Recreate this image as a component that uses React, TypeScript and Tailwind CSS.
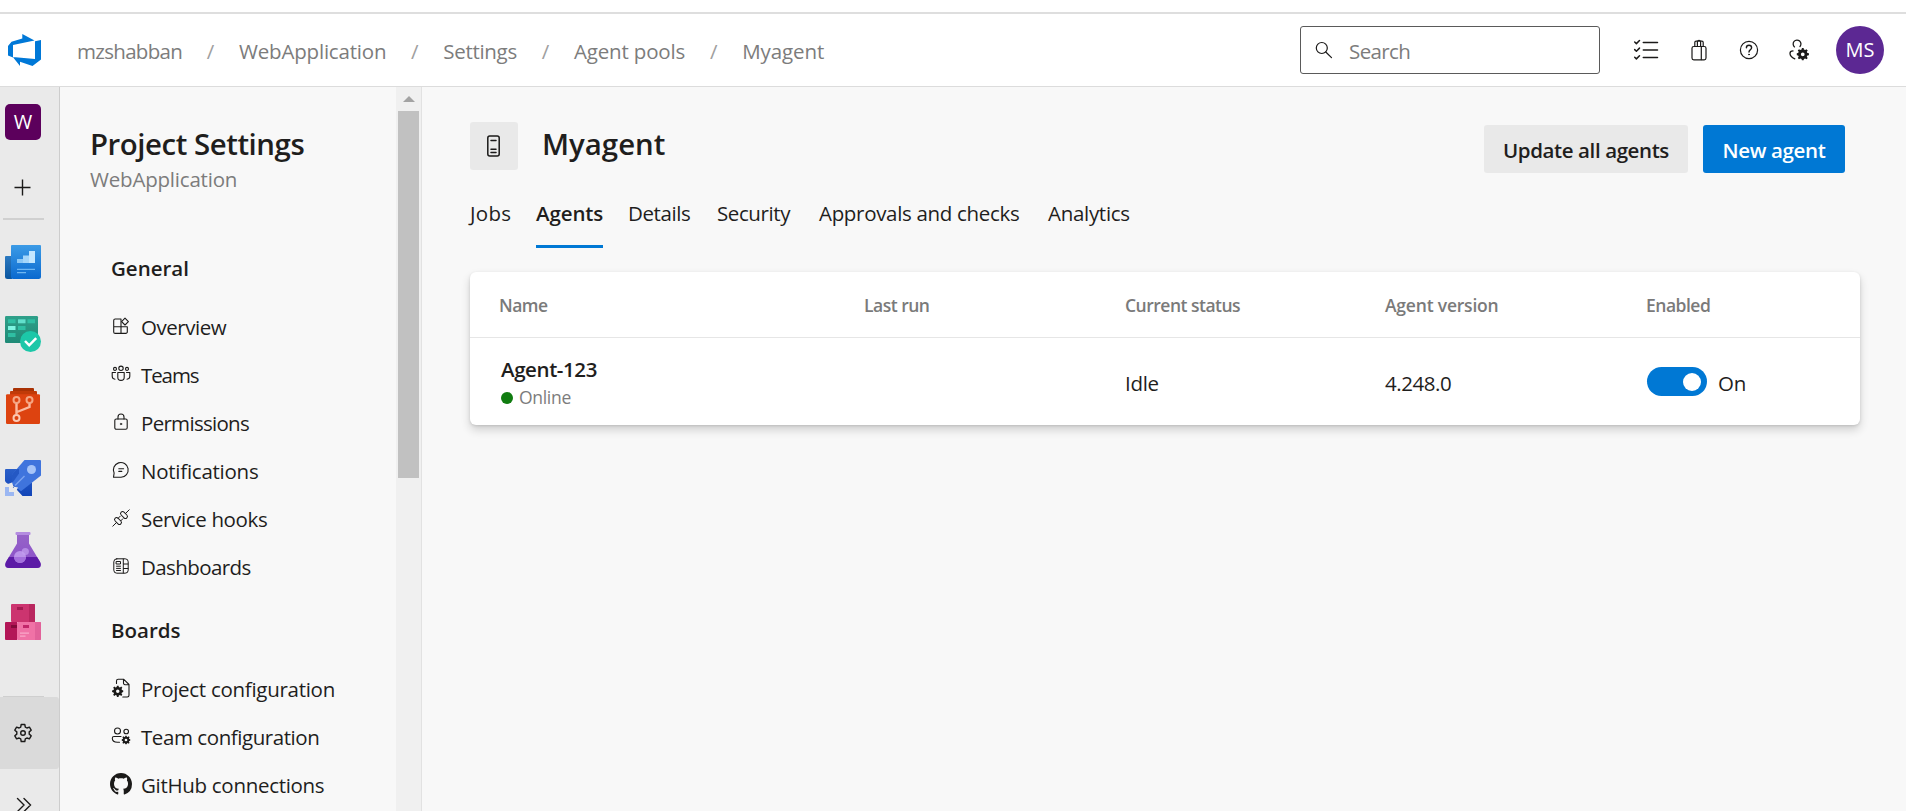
import React from "react";

const gearPath =
  "M6.9 0h2.2l.4 2 1.6.7 1.7-1.2 1.6 1.6-1.2 1.7.7 1.6 2 .4v2.4l-2 .4-.7 1.6 1.2 1.7-1.6 1.6-1.7-1.2-1.6.7-.4 2H6.9l-.4-2-1.6-.7-1.7 1.2-1.6-1.6 1.2-1.7-.7-1.6-2-.4V6.800l2-.4.7-1.6-1.2-1.700 1.600-1.600 1.700 1.200 1.600-.7zM8 5.600a2.400 2.400 0 100 4.800 2.400 2.400 0 000-4.800z";

function SolidGear({ x, y, size }: { x: number; y: number; size: number }) {
  return (
    <svg x={x} y={y} width={size} height={size} viewBox="0 0 16 16">
      <path d={gearPath} fill="#1b1a19" stroke="none" fillRule="evenodd" />
    </svg>
  );
}

function Line({ size, children }: { size: number; children: React.ReactNode }) {
  return (
    <svg
      width={size}
      height={size}
      viewBox={`0 0 ${size} ${size}`}
      fill="none"
      stroke="#1b1a19"
      strokeWidth="1.1"
      strokeLinecap="round"
      strokeLinejoin="round"
      className="shrink-0 overflow-visible"
    >
      {children}
    </svg>
  );
}

/* ---------- header icons ---------- */

function DevOpsLogo() {
  return (
    <svg width="33" height="32" viewBox="0 0 33 32" className="shrink-0">
      <path
        fill="#0078d7"
        d="M33 6v19.500L24.500 32 12 27.800V32L4.800 23l22.200 1.900V7.200zM26.500 6.500 14.300 0v4.500L3.500 7.700 0 12v9.500l5 2V11z"
      />
    </svg>
  );
}

const SearchIcon = () => (
  <Line size={18}>
    <circle cx="6.800" cy="7" r="5.500" strokeWidth="1.2" />
    <path strokeWidth="1.2" d="M10.800 11 16.500 16.700" />
  </Line>
);

const ChecklistIcon = () => (
  <Line size={24}>
    <path strokeWidth="1.500" d="M.7 4l1.700 1.600L5.500 2.500M.7 11.600l1.700 1.600 3.100-3.100M.7 19.300l1.700 1.600 3.100-3.100M9.300 4.500h14.200M9.300 12h14.200M9.300 19.500h14.200" />
  </Line>
);

const BagIcon = () => (
  <Line size={22}>
    <rect x="4" y="7.500" width="14" height="13.300" rx="1.800" strokeWidth="1.200" />
    <path strokeWidth="1.200" d="M6.800 7.500V3.500a1.300 1.300 0 011.300-1.300h5.800a1.300 1.300 0 011.300 1.300v4M9.400 7V3a1.600 1.600 0 013.200 0V7M13.300 7.700v12.900" />
  </Line>
);

const HelpIcon = () => (
  <Line size={20}>
    <circle cx="10" cy="10" r="8.600" strokeWidth="1.200" />
    <path strokeWidth="1.400" d="M7.400 7.800a2.600 2.600 0 115.200 0c0 1.900-2.600 2.200-2.600 4.200" />
    <circle cx="10" cy="14.500" r=".5" fill="#1b1a19" strokeWidth=".8" />
  </Line>
);

const UserGearIcon = () => (
  <Line size={22}>
    <path strokeWidth="1.300" d="M6.500 7.900A3.900 3.900 0 1112 7.500M6.800 19.800C3.800 18.500 2 16.700 2 14.500c0-1.700 1-2.600 3-2.600" />
    <SolidGear x={8.500} y={9} size={12.500} />
  </Line>
);

/* ---------- rail icons ---------- */

const OverviewTile = () => (
  <svg width="36" height="36" viewBox="0 0 36 36">
    <defs>
      <linearGradient id="ovA" x1="0" y1="0" x2="0" y2="1">
        <stop offset="0" stopColor="#3c9be6" />
        <stop offset="1" stopColor="#0a69cf" />
      </linearGradient>
      <linearGradient id="ovB" x1="0" y1="0" x2="0" y2="1">
        <stop offset="0" stopColor="#2c79c0" />
        <stop offset="1" stopColor="#0a559f" />
      </linearGradient>
    </defs>
    <g transform="translate(0 1)">
      <path d="M1 11h6v23H2.500A2.500 2.500 0 010 31.500V12a1 1 0 011-1z" fill="url(#ovB)" />
      <path d="M7 0h28a1 1 0 011 1v30.500a2.500 2.500 0 01-2.500 2.500H8A2 2 0 016 32V1a1 1 0 011-1z" fill="url(#ovA)" />
      <path d="M12 14h6v4h-6z" fill="#8cc8f6" />
      <path d="M18 10.500h6V18h-6z" fill="#a5d6fa" />
      <path d="M24 6h6v12h-6z" fill="#c3e7ff" />
      <path d="M12 23.800h18V25H12zM12 27h9v1.200h-9z" fill="#6eb6f2" />
    </g>
  </svg>
);

const BoardsTile = () => (
  <svg width="36" height="36" viewBox="0 0 36 36">
    <defs>
      <linearGradient id="bdA" x1="0" y1="0" x2="0" y2="1">
        <stop offset="0" stopColor="#2fa08a" />
        <stop offset="1" stopColor="#1f8a76" />
      </linearGradient>
    </defs>
    <rect width="33" height="27" rx="1.200" fill="url(#bdA)" />
    <path d="M3 3.300h7.500v4H3zM22.500 3.300H30v4h-7.500zM13 10h7.500v4H13zM3 17h7.500v4H3z" fill="#2fbfa3" />
    <path d="M13 3.300h7.500v4H13z" fill="#62e0cc" />
    <path d="M3 10h7.500v4H3z" fill="#7ff5e2" />
    <circle cx="25.500" cy="25.500" r="10.500" fill="#1cc7a8" />
    <path d="M20 25l4.200 4.300 7-7.200" fill="none" stroke="#fff" strokeWidth="2.500" />
  </svg>
);

const ReposTile = () => (
  <svg width="36" height="36" viewBox="0 0 36 36">
    <path d="M9 0h19a1 1 0 011 1v2.500H8V1a1 1 0 011-1z" fill="#a93205" />
    <path d="M6 3h25a1 1 0 011 1v3H5V4a1 1 0 011-1z" fill="#c13a08" />
    <rect x="1" y="6.200" width="34" height="29.800" rx="1.200" fill="#dd4310" />
    <g fill="none" stroke="#f5a583" strokeWidth="2">
      <circle cx="11.500" cy="12" r="3" />
      <circle cx="24.500" cy="12" r="3" />
      <circle cx="11.500" cy="30" r="3" stroke="#fbc9b4" />
      <path d="M11.500 15.500v11M24.500 15.500v3.500l-12.500 5" stroke="#fbb99f" strokeWidth="2.400" />
    </g>
  </svg>
);

const PipelinesTile = () => (
  <svg width="36" height="36" viewBox="0 0 36 36">
    <defs>
      <linearGradient id="ppA" x1="0" y1="0" x2="0" y2="1">
        <stop offset="0" stopColor="#2a5fc8" />
        <stop offset="1" stopColor="#1245b8" />
      </linearGradient>
    </defs>
    <path d="M1 9h13l13 14v13h-9.500L12 30 1 22.500 0 21V10a1 1 0 011-1z" fill="url(#ppA)" />
    <path d="M19.500 0H35a1 1 0 011 1v14.500L16 31.200 7 24V14.500z" fill="#3f74dd" />
    <path d="M7 14.500 12 9h2v4.500L8 22H7z" fill="#2458c4" />
    <path d="M9.500 25 19 15.500l1 1-9.500 9.500z" fill="#7ba3ef" />
    <circle cx="26.500" cy="9.500" r="4.500" fill="#a6c4f8" />
    <path d="M7 22.500l1.500 4 4.500 1-1.500 3 4 5.500H9v-9H0v-2z" fill="#eaeaea" />
    <path d="M0 27h4v5h5v4H0z" fill="#9bb7f2" />
  </svg>
);

const TestTile = () => (
  <svg width="36" height="36" viewBox="0 0 36 36">
    <defs>
      <linearGradient id="tsA" x1="0" y1="0" x2="0" y2="1">
        <stop offset="0" stopColor="#9663c8" />
        <stop offset="1" stopColor="#8a4fc9" />
      </linearGradient>
    </defs>
    <path d="M12 2h12v9.500L34.500 29c2.500 4 1 7-2.500 7H4c-3.500 0-5-3-2.500-7L12 11.500z" fill="url(#tsA)" />
    <path d="M4 25h28l2.500 4c2.500 4 1 7-2.500 7H4c-3.500 0-5-3-2.500-7z" fill="#5c1ba6" />
    <rect x="10.500" y="0" width="15" height="3" rx="1" fill="#b48ce0" />
    <circle cx="20.300" cy="19.500" r="3.600" fill="#b58be4" />
    <circle cx="15" cy="25" r="6" fill="#c39df0" fillOpacity=".85" />
    <path d="M9 25h12a6 6 0 01-12 0z" fill="#a36fdc" />
  </svg>
);

const ArtifactsTile = () => (
  <svg width="36" height="36" viewBox="0 0 36 36">
    <rect x="6" y="0" width="24" height="18" rx="1" fill="#cc346f" />
    <path d="M24 0h5a1 1 0 011 1v17h-6z" fill="#b9275f" />
    <path d="M12 3h6v3h-6z" fill="#a31a50" />
    <path d="M1 18h11v18H1a1 1 0 01-1-1V19a1 1 0 011-1z" fill="#b31657" />
    <path d="M6 21h6v3H6z" fill="#850a3b" />
    <rect x="12" y="18" width="24" height="18" rx="1" fill="#f072a6" />
    <path d="M30 18h5a1 1 0 011 1v16a1 1 0 01-1 1h-5z" fill="#e2629a" />
    <path d="M18 21h6v3h-6z" fill="#c2276a" />
    <path d="M15 28.500h9v1.200h-9zM15 31.500h5.500v1.200H15z" fill="#f9a8c9" />
  </svg>
);

const PlusIcon = () => (
  <Line size={18}>
    <path strokeLinecap="butt" strokeWidth="1.400" d="M.5 9.500h16M8.500 1.500v16" />
  </Line>
);

const SettingsIcon = () => (
  <Line size={20}>
    <path
      strokeWidth="1.400"
      d="M8.200 1.500h3.600l.5 2.600 1.600.9 2.500-.9 1.800 3.100-2 1.700v2.200l2 1.700-1.800 3.100-2.500-.9-1.600.9-.5 2.600H8.200l-.5-2.600-1.600-.9-2.500.9-1.800-3.100 2-1.700V8.900l-2-1.700 1.800-3.100 2.500.9 1.600-.9z"
    />
    <circle cx="10" cy="10" r="2.300" strokeWidth="1.400" />
  </Line>
);

const ExpandIcon = () => (
  <Line size={16}>
    <path strokeLinejoin="miter" strokeWidth="1.400" d="M1.500 1.500 8 8l-6.500 6.500M8 1.500 14.500 8 8 14.500" />
  </Line>
);

/* ---------- settings menu icons ---------- */

const OverviewIcon = () => (
  <Line size={18}>
    <path d="M9 9.800H1.700V3.500A1.500 1.500 0 013.200 2H9zM9 9.800v6.600M1.700 9.800v5.100a1.500 1.500 0 001.500 1.500h10.600a1.500 1.500 0 001.500-1.500V9.800H9" />
    <path d="M13 1.200l3.400 3.400L13 8 9.600 4.600z" />
  </Line>
);

const TeamsIcon = () => (
  <Line size={20}>
    <circle cx="10" cy="4.300" r="2.200" />
    <circle cx="4" cy="4.900" r="1.500" />
    <circle cx="16" cy="4.900" r="1.500" />
    <path d="M6.800 8.500h6.400v4.700a3.200 3.200 0 01-6.400 0zM4.500 8.500H1.200v3.800c0 1.700 1 2.700 2.800 2.900M15.500 8.500h3.300v3.800c0 1.700-1 2.700-2.800 2.900" />
  </Line>
);

const LockIcon = () => (
  <Line size={18}>
    <rect x="2.800" y="6" width="12.400" height="10.200" rx="1.500" />
    <path d="M6 6V4a3 3 0 016 0v2" />
    <circle cx="9" cy="11" r=".8" fill="#1b1a19" strokeWidth=".5" />
  </Line>
);

const ChatIcon = () => (
  <Line size={18}>
    <path d="M1.500 16.300l.6-4.200A7.400 7.400 0 119 16.300zM6.800 7.700h4.800M6.800 10.400h3" />
  </Line>
);

const PlugIcon = () => (
  <Line size={18}>
    <g strokeWidth="1">
      <path d="M.8 17.200l3.600-3.600M17.200.8l-3.600 3.600" />
      <rect x="-2" y="-4" width="4" height="8" rx="2" transform="translate(6 12) rotate(-45)" />
      <rect x="-2" y="-4" width="4" height="8" rx="2" transform="translate(12 6) rotate(-45)" />
      <path d="M6.200 9.200l2-2M8.800 11.800l2-2" />
    </g>
  </Line>
);

const DashboardIcon = () => (
  <Line size={18}>
    <g strokeWidth="1">
      <rect x="1.800" y="1.800" width="14.400" height="14.400" rx="3" />
      <path d="M11.300 2v14M11.500 7h4.500M11.500 11.500h4.500M4.500 9.200h4M4.500 11.400h4M4.500 13.500h4" />
      <rect x="4.500" y="4.500" width="4" height="2.500" />
    </g>
  </Line>
);

const DocGearIcon = () => (
  <Line size={20}>
    <path d="M5.500 5.500V3a1.700 1.700 0 011.700-1.700h5.600L18 6.500v10.800a1.700 1.700 0 01-1.700 1.700h-4.500M12.500 1.500V5A1.600 1.600 0 0014 6.700h3.800" />
    <SolidGear x={1} y={7.500} size={11.500} />
  </Line>
);

const PeopleGearIcon = () => (
  <Line size={20}>
    <circle cx="6.500" cy="5" r="3" />
    <circle cx="15.200" cy="5.500" r="2.300" />
    <path d="M10 10.500H3A1.700 1.700 0 001.300 12.200c0 2.500 2 4 5.200 4h2" />
    <SolidGear x={10.500} y={9.500} size={9} />
  </Line>
);

const GitHubIcon = () => (
  <svg width="22" height="22" viewBox="0 0 16 16" className="shrink-0">
    <path
      fill="#1b1a19"
      d="M8 0C3.580 0 0 3.580 0 8c0 3.540 2.290 6.530 5.470 7.590.4.070.55-.17.55-.38 0-.19-.01-.82-.01-1.490-2.010.37-2.530-.49-2.690-.94-.09-.23-.48-.94-.82-1.130-.28-.15-.68-.52-.01-.53.63-.01 1.080.58 1.230.82.72 1.210 1.870.87 2.330.66.07-.52.28-.87.51-1.070-1.780-.2-3.640-.89-3.640-3.950 0-.87.31-1.590.82-2.150-.08-.2-.36-1.020.08-2.120 0 0 .67-.21 2.200.82.64-.18 1.320-.27 2-.27s1.360.09 2 .27c1.530-1.040 2.200-.82 2.200-.82.44 1.100.16 1.920.08 2.120.51.56.82 1.270.82 2.150 0 3.070-1.870 3.750-3.650 3.950.29.25.54.73.54 1.480 0 1.070-.01 1.930-.01 2.200 0 .21.15.46.55.38A8.010 8.010 0 0016 8c0-4.420-3.580-8-8-8z"
    />
  </svg>
);

const PoolIcon = () => (
  <Line size={22}>
    <rect x="4.800" y="1" width="11.400" height="20" rx="2" strokeWidth="1.500" />
    <path strokeWidth="1.500" d="M8 5.500h5M8 14.300h5M8 17.500h5" />
  </Line>
);

/* ---------- data ---------- */

const crumbs = [
  { label: "mzshabban", cls: "tracking-[-0.7px]" },
  { label: "WebApplication", cls: "tracking-[-0.2px]" },
  { label: "Settings", cls: "tracking-[-0.3px]" },
  { label: "Agent pools", cls: "tracking-[-0.15px]" },
  { label: "Myagent", cls: "tracking-[-0.1px]" },
];

const general = [
  { label: "Overview", icon: <OverviewIcon />, cls: "tracking-[-0.45px]" },
  { label: "Teams", icon: <TeamsIcon />, cls: "tracking-[-1.1px]" },
  { label: "Permissions", icon: <LockIcon />, cls: "tracking-[-0.7px]" },
  { label: "Notifications", icon: <ChatIcon />, cls: "tracking-[-0.25px]" },
  { label: "Service hooks", icon: <PlugIcon />, cls: "tracking-[-0.35px]" },
  { label: "Dashboards", icon: <DashboardIcon />, cls: "tracking-[-0.6px]" },
];

const boards = [
  { label: "Project configuration", icon: <DocGearIcon />, cls: "tracking-[-0.28px]" },
  { label: "Team configuration", icon: <PeopleGearIcon />, cls: "tracking-[-0.43px]" },
  { label: "GitHub connections", icon: <GitHubIcon />, cls: "tracking-[-0.3px]" },
];

const tabs = [
  { label: "Jobs", cls: "w-[66px] tracking-[0.3px]" },
  { label: "Agents", cls: "w-[92px] tracking-[-0.1px]", active: true },
  { label: "Details", cls: "w-[89px] tracking-[-0.4px]" },
  { label: "Security", cls: "w-[102px] tracking-[-0.4px]" },
  { label: "Approvals and checks", cls: "w-[229px] tracking-[-0.32px]" },
  { label: "Analytics", cls: "w-[90px] tracking-[-0.3px]" },
];

const railTiles = [OverviewTile, BoardsTile, ReposTile, PipelinesTile, TestTile, ArtifactsTile];

function MenuSection({ items }: { items: { label: string; icon: React.ReactNode; cls: string }[] }) {
  return (
    <ul>
      {items.map((it) => (
        <li key={it.label} className="flex h-12 items-center gap-[9px] pl-[50px]">
          <span className="flex w-[22px] justify-center pb-[2px]">{it.icon}</span>
          <span className={it.cls}>{it.label}</span>
        </li>
      ))}
    </ul>
  );
}

/* ---------- page ---------- */

function Header() {
  return (
    <header className="flex h-[75px] shrink-0 items-center border-t-2 border-b border-t-[#dedede] border-b-[#dcdcdc] bg-white pl-2">
      <DevOpsLogo />
      <nav className="ml-9 flex items-center gap-[24px] pt-0.5 text-[#7c7c7c]">
        {crumbs.map((c, i) => (
          <React.Fragment key={c.label}>
            {i > 0 && <span className="w-[9px] text-center text-[#a0a0a0]">/</span>}
            <span className={c.cls}>{c.label}</span>
          </React.Fragment>
        ))}
      </nav>
      <div className="ml-auto flex h-12 w-[300px] items-center rounded-[3px] border border-[#5a5a5a] pl-[14px]">
        <SearchIcon />
        <span className="ml-[16px] pt-0.5 tracking-[-0.6px] text-[#7c7c7c]">Search</span>
      </div>
      <div className="ml-[34px] flex items-center">
        <ChecklistIcon />
        <span className="ml-[30px]">
          <BagIcon />
        </span>
        <span className="ml-[29px]">
          <HelpIcon />
        </span>
        <span className="ml-[29px]">
          <UserGearIcon />
        </span>
      </div>
      <div className="mr-[22px] ml-[26px] flex size-12 items-center justify-center rounded-full bg-[#5c2893] text-[20px] text-white">
        MS
      </div>
    </header>
  );
}

function Rail() {
  return (
    <aside className="flex w-[60px] shrink-0 flex-col border-r border-[#cdcdcd] bg-[#eaeaea] *:shrink-0">
      <div className="mt-[17px] ml-[5px] flex size-9 items-center justify-center rounded-[5px] bg-[#5c005c] text-[20px] text-white">
        W
      </div>
      <div className="mt-[38px] ml-[14px]">
        <PlusIcon />
      </div>
      <div className="mt-[22px] ml-[3px] h-0.5 w-[41px] bg-[#d0d0d0]" />
      <div className="mt-6 ml-[5px] flex flex-col gap-9">
        {railTiles.map((Tile, i) => (
          <Tile key={i} />
        ))}
      </div>
      <div className="mt-[56px] ml-[3px] h-px w-[41px] bg-[#cfcfcf]" />
      <div className="flex h-[72px] items-center rounded-r-[3px] bg-[#dadada] pl-[13px]">
        <SettingsIcon />
      </div>
      <div className="mt-[28px] ml-[16px]">
        <ExpandIcon />
      </div>
    </aside>
  );
}

function SettingsPanel() {
  return (
    <div className="flex w-[362px] shrink-0 border-r border-[#e2e2e2]">
      <div className="w-[336px]">
        <h2 className="mt-[37px] pl-[30px] text-[29.4px] leading-[40px] font-semibold tracking-[-0.45px]">
          Project Settings
        </h2>
        <p className="pl-[30px] leading-[30px] tracking-[-0.2px] text-[#7c7c7c]">WebApplication</p>
        <h3 className="mt-[50px] pl-[51px] leading-[48px] font-semibold">General</h3>
        <div className="mt-[11px]">
          <MenuSection items={general} />
        </div>
        <h3 className="mt-[15px] pl-[51px] leading-[48px] font-semibold">Boards</h3>
        <div className="mt-[11px]">
          <MenuSection items={boards} />
        </div>
      </div>
      <div className="flex flex-1 flex-col items-center bg-[#f0f0f0] pt-[9px]">
        <svg width="12" height="6" viewBox="0 0 12 6">
          <path d="M6 0l6 6H0z" fill="#a3a3a3" />
        </svg>
        <div className="mt-[9px] h-[367px] w-[21px] bg-[#c1c1c1]" />
      </div>
    </div>
  );
}

const grid = "grid grid-cols-[365px_261px_260px_261px_1fr] pl-[29px]";

function AgentsTable() {
  return (
    <section className="mt-[23px] mr-[46px] h-[153px] rounded-md bg-white shadow-[0_5px_10px_rgba(0,0,0,0.16),0_1px_3px_rgba(0,0,0,0.12)]">
      <div
        className={`${grid} h-[66px] items-center border-b border-[#e6e6e6] pt-[2px] text-[17.5px] font-semibold tracking-[-0.5px] text-[#7a7a7a]`}
      >
        <span>Name</span>
        <span>Last run</span>
        <span>Current status</span>
        <span className="tracking-[-0.2px]">Agent version</span>
        <span>Enabled</span>
      </div>
      <div className={`${grid} h-[87px] items-center`}>
        <div className="pt-px pl-0.5">
          <div className="leading-[30px] font-semibold tracking-[-0.4px]">Agent-123</div>
          <div className="flex items-center gap-[6px] text-[17.5px] leading-[26px] tracking-[-0.3px] text-[#7c7c7c]">
            <span className="mt-px size-3 rounded-full bg-[#107c10]" />
            Online
          </div>
        </div>
        <span />
        <span className="pt-1 tracking-[-0.3px]">Idle</span>
        <span className="pt-1 tracking-[-0.45px]">4.248.0</span>
        <div className="flex items-center pl-px">
          <span className="flex h-[29px] w-[60px] items-center justify-end rounded-full bg-[#0078d4] pr-[6px]">
            <span className="size-[18px] rounded-full bg-white" />
          </span>
          <span className="ml-[11px] pt-1 tracking-[-0.3px]">On</span>
        </div>
      </div>
    </section>
  );
}

function Main() {
  return (
    <main className="min-w-0 flex-1 pl-12">
      <div className="flex pt-[35px]">
        <div className="flex size-12 items-center justify-center rounded-[3px] bg-[#e9e9e9]">
          <PoolIcon />
        </div>
        <h1 className="ml-6 text-[29.4px] leading-[45px] font-semibold">Myagent</h1>
        <div className="mt-[3px] mr-[61px] ml-auto flex gap-[15px] font-semibold">
          <button className="h-12 w-[204px] rounded-[3px] bg-[#e9e9e9] pt-[3px] tracking-[-0.4px]">
            Update all agents
          </button>
          <button className="h-12 w-[142px] rounded-[3px] bg-[#0078d4] pt-[3px] tracking-[-0.35px] text-white">
            New agent
          </button>
        </div>
      </div>
      <div className="mt-[19px] flex h-[57px]">
        {tabs.map((t) => (
          <div key={t.label} className={t.cls}>
            {t.active ? (
              <span className="inline-block h-[56px] border-b-[3px] border-[#0078d4] leading-[42px] font-semibold">
                {t.label}
              </span>
            ) : (
              <span className="leading-[42px] whitespace-nowrap">{t.label}</span>
            )}
          </div>
        ))}
      </div>
      <AgentsTable />
    </main>
  );
}

export default function App() {
  return (
    <div className="flex h-[811px] w-full flex-col overflow-hidden bg-[#f8f8f8] font-['Open_Sans','Noto_Sans',sans-serif] text-[20.5px] text-[#1f1e1d]">
      <div className="h-3 shrink-0 bg-white" />
      <Header />
      <div className="flex min-h-0 flex-1">
        <Rail />
        <SettingsPanel />
        <Main />
      </div>
    </div>
  );
}
